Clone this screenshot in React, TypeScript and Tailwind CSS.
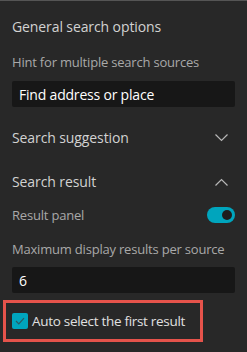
import React from "react";

function ChevronDown() {
  return (
    <svg width="13" height="8" viewBox="0 0 13 8" fill="none">
      <path d="M0.5 0.5 L6.5 6.5 L12.5 0.5" stroke="#b8b8b8" strokeWidth="1.2" />
    </svg>
  );
}
function ChevronUp() {
  return (
    <svg width="13" height="8" viewBox="0 0 13 8" fill="none">
      <path d="M0.5 7.5 L6.5 1.5 L12.5 7.5" stroke="#b8b8b8" strokeWidth="1.2" />
    </svg>
  );
}

export default function App() {
  return (
    <div
      className="w-[247px] h-[352px] bg-[#282828] border-t border-[#555555] overflow-hidden"
      style={{ fontFamily: '"Open Sans", "Noto Sans", sans-serif' }}
    >
      <div className="px-3 pt-[16px] flex flex-col">
        <div className="text-[14px] leading-[20px] text-[#d2d2d2] tracking-[-0.1px]">General search options</div>
        <div className="mt-[16px] text-[13px] leading-[18px] text-[#a9a9a9] tracking-[-0.2px]">Hint for multiple search sources</div>
        <div className="mt-[10px] h-[26px] bg-[#171717] rounded-[2px] flex items-center px-[7px] text-[14px] text-white tracking-[-0.2px]">
          Find address or place
        </div>
        <div className="mt-[21px] flex items-center justify-between h-[20px] pr-[7px]">
          <span className="text-[14px] leading-[20px] text-[#d2d2d2] tracking-[-0.1px]">Search suggestion</span>
          <ChevronDown />
        </div>
        <div className="mt-[24px] flex items-center justify-between h-[20px] pr-[7px]">
          <span className="text-[14px] leading-[20px] text-[#d2d2d2] tracking-[-0.1px]">Search result</span>
          <ChevronUp />
        </div>
        <div className="mt-[15px] flex items-center justify-between h-[16px]">
          <span className="text-[13px] leading-[18px] text-[#a9a9a9] tracking-[-0.2px]">Result panel</span>
          <div className="w-[28px] h-[16px] rounded-full bg-[#00a5bd] flex items-center justify-end pr-[3px]">
            <div className="w-[10px] h-[10px] rounded-full bg-[#1e1e1e]" />
          </div>
        </div>
        <div className="mt-[17px] text-[13px] leading-[18px] text-[#a9a9a9] tracking-[-0.2px]">Maximum display results per source</div>
        <div className="mt-[9px] h-[26px] bg-[#171717] rounded-[2px] flex items-center px-[7px] text-[14px] text-white">
          6
        </div>
      </div>
      <div className="ml-[3px] mt-[7px] w-[200px] h-[42px] border-[3px] border-[#e5534b] flex items-center pl-[6px] gap-[4px]">
        <div className="w-[16px] h-[16px] rounded-[2px] bg-[#00a5bd] flex items-center justify-center">
          <svg width="10" height="8" viewBox="0 0 10 8" fill="none">
            <path d="M1 4 L3.8 6.8 L9 1.2" stroke="#2a5a63" strokeWidth="1.2" />
          </svg>
        </div>
        <span className="text-[13.5px] leading-[20px] text-[#e0e0e0] tracking-[-0.3px]">Auto select the first result</span>
      </div>
    </div>
  );
}
